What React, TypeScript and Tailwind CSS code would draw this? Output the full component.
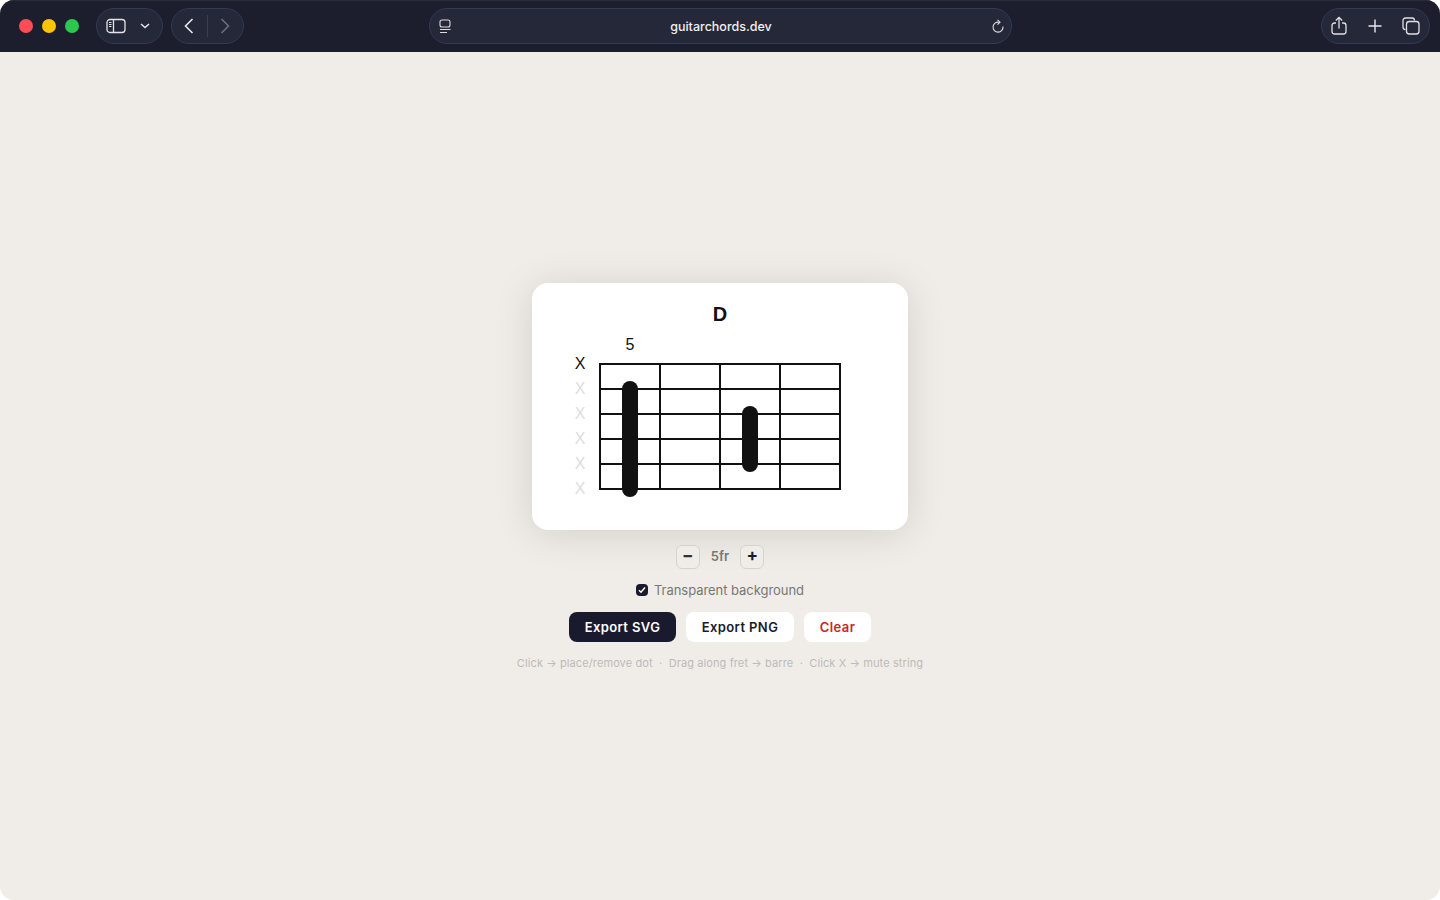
import { useState } from 'react';

const strings = [0, 1, 2, 3, 4, 5];
const frets = [0, 1, 2, 3, 4];

function ChordDiagram() {
  return (
    <svg width="328" height="207" viewBox="0 -8 328 207" className="block">
      <text x="164" y="13.5" textAnchor="middle" fontFamily="Liberation Sans, Arial, sans-serif" fontSize="20" fontWeight="700" fill="#111111">
        D
      </text>
      <text x="74" y="43" textAnchor="middle" fontFamily="Liberation Sans, Arial, sans-serif" fontSize="16" fill="#111111">
        5
      </text>
      {strings.map((s) => (
        <text
          key={s}
          x="24"
          y={61.5 + s * 25}
          textAnchor="middle"
          fontFamily="Liberation Sans, Arial, sans-serif"
          fontSize="16"
          fill={s === 0 ? '#111111' : '#dddddd'}
        >
          X
        </text>
      ))}
      {strings.map((s) => (
        <line key={s} x1="43" x2="285" y1={57 + s * 25} y2={57 + s * 25} stroke="#111111" strokeWidth="2" />
      ))}
      {frets.map((f) => (
        <line key={f} x1={44 + f * 60} x2={44 + f * 60} y1="56" y2="183" stroke="#111111" strokeWidth="2" />
      ))}
      <rect x="66" y="74" width="16" height="116" rx="8" fill="#111111" />
      <rect x="186" y="99" width="16" height="66" rx="8" fill="#111111" />
    </svg>
  );
}

function Toolbar() {
  return (
    <div className="flex h-[52px] shrink-0 items-center bg-[#1c1e2e] pl-[19px] pr-[10px] shadow-[inset_0_1px_0_#2a2c3c]">
      <div className="flex gap-[9px]">
        <span className="size-[14px] rounded-full bg-[#ff4d55]" />
        <span className="size-[14px] rounded-full bg-[#ffc400]" />
        <span className="size-[14px] rounded-full bg-[#2cc84d]" />
      </div>
      <div className="ml-[17px] flex h-9 w-[67px] items-center rounded-full border border-[#333a55] bg-[#252838] pl-[9px]">
        <svg width="20" height="16" viewBox="0 0 20 16" fill="none" stroke="#e4e4e8" strokeWidth="1.3">
          <rect x="1" y="1.5" width="18" height="13" rx="3" />
          <path d="M7.5 1.5v13" />
          <path d="M3 4.5h2.5M3 6.5h2.5M3 8.5h2.5" strokeWidth="1" />
        </svg>
        <svg width="10" height="6" viewBox="0 0 10 6" fill="none" stroke="#e4e4e8" strokeWidth="1.5" className="ml-[14px]">
          <path d="M1 1l4 3.6L9 1" />
        </svg>
      </div>
      <div className="ml-2 flex h-9 w-[73px] items-center rounded-full border border-[#333a55] bg-[#252838]">
        <svg width="10" height="16" viewBox="0 0 10 16" fill="none" stroke="#e8e8ec" strokeWidth="1.6" className="ml-[12px]">
          <path d="M8.5 1L1.5 8l7 7" />
        </svg>
        <span className="ml-[13px] h-[22px] w-px bg-[#3a3e50]" />
        <svg width="10" height="16" viewBox="0 0 10 16" fill="none" stroke="#6b6e7c" strokeWidth="1.6" className="ml-[12px]">
          <path d="M1.5 1l7 7-7 7" />
        </svg>
      </div>
      <div className="relative ml-[185px] flex h-9 w-[583px] items-center justify-between rounded-full border border-[#333a55] bg-[#252838] pl-[9px] pr-[6px]">
        <svg width="13" height="15" viewBox="0 0 13 15" fill="none" stroke="#dcdce0" strokeWidth="1.1">
          <rect x="1" y="1" width="10" height="7" rx="2" />
          <path d="M1 10.5h10.5M1 13.5h7" />
        </svg>
        <span className="absolute left-0 right-0 ml-[1px] mt-[2px] text-center text-[12.5px] font-medium text-[#f0f0f2]">
          guitarchords.dev
        </span>
        <svg width="14" height="16" viewBox="0 0 14 16" fill="none" stroke="#dcdce0" strokeWidth="1.1" className="mt-[1px]">
          <path d="M8 3.2A5 5 0 1 0 12 7.5" />
          <path d="M6.5 0.8L9 3.2 6.5 5.6" />
        </svg>
      </div>
      <div className="ml-auto flex h-9 w-[109px] items-center rounded-full border border-[#333a55] bg-[#252838] pl-[9px]">
        <svg width="16" height="20" viewBox="0 0 16 20" fill="none" stroke="#e0e0e4" strokeWidth="1.3" className="mb-[1px]">
          <path d="M5 7H3.5A2.5 2.5 0 0 0 1 9.5v6A2.5 2.5 0 0 0 3.5 18h9a2.5 2.5 0 0 0 2.5-2.5v-6A2.5 2.5 0 0 0 12.5 7H11" />
          <path d="M8 12.5V1.5M4.8 4.5L8 1.3l3.2 3.2" />
        </svg>
        <svg width="14" height="14" viewBox="0 0 14 14" fill="none" stroke="#e8e8ec" strokeWidth="1.4" className="ml-[21px]">
          <path d="M7 0.5v13M0.5 7h13" />
        </svg>
        <svg width="18" height="18" viewBox="0 0 18 18" fill="none" stroke="#e0e0e4" strokeWidth="1.3" className="ml-[20px]">
          <path d="M3.5 12.5A2.5 2.5 0 0 1 1 10.2V3.5A2.5 2.5 0 0 1 3.5 1h6.7A2.5 2.5 0 0 1 12.5 3.5" />
          <rect x="4.5" y="4.5" width="12.5" height="12.5" rx="2.8" />
        </svg>
      </div>
    </div>
  );
}

export default function App() {
  const [transparent, setTransparent] = useState(true);

  return (
    <div className="h-[900px] w-[1440px] overflow-hidden bg-white">
      <div className="flex h-full flex-col overflow-hidden rounded-[14px] bg-[#f0ede8] font-['Inter',sans-serif]">
        <Toolbar />
        <div className="flex flex-1 flex-col items-center justify-center">
          <div className="rounded-2xl bg-white px-6 pb-6 pt-4 shadow-[0_4px_40px_rgba(0,0,0,0.12)]">
            <ChordDiagram />
          </div>
          <div className="mt-[15px] flex items-center gap-[11px]">
            <button className="flex size-6 items-center justify-center rounded-md border border-[#d5d3ce] bg-[#f0ede8] pb-[2px] text-[17px] leading-none font-bold text-[#333333]">
              −
            </button>
            <span className="text-[13px] font-semibold text-[#777777]">5fr</span>
            <button className="flex size-6 items-center justify-center rounded-md border border-[#d5d3ce] bg-[#f0ede8] pb-[2px] text-[17px] leading-none font-bold text-[#1a1a2e]">
              +
            </button>
          </div>
          <label className="mt-[13px] flex items-center gap-[6px] text-[13px] leading-[16px] tracking-[-0.05px] text-[#777777]">
            <input type="checkbox" checked={transparent} onChange={() => setTransparent(!transparent)} className="sr-only" />
            <span className="flex size-[12px] items-center justify-center rounded-[4px] bg-[#1a1a2e]">
              <svg width="8" height="8" viewBox="0 0 8 8" fill="none" stroke="#ffffff" strokeWidth="1.5">
                <path d="M1 4.2l2 2L7 1.5" />
              </svg>
            </span>
            Transparent background
          </label>
          <div className="mt-[14px] flex gap-[10px]">
            <button className="h-[30px] w-[107px] rounded-lg bg-[#1a1a2e] pt-[2px] text-[13px] font-semibold tracking-[0.4px] text-white">Export SVG</button>
            <button className="h-[30px] w-[108px] rounded-lg bg-white pt-[2px] text-[13px] font-semibold tracking-[0.4px] text-[#1a1a2e]">Export PNG</button>
            <button className="h-[30px] w-[67px] rounded-lg bg-white pt-[2px] text-[13px] font-semibold tracking-[0.4px] text-[#c62828]">Clear</button>
          </div>
          <p className="mt-[14px] whitespace-pre text-[11px] leading-[14px] tracking-[0.1px] text-[#bbbbbb]">
            Click → place/remove dot  ·  Drag along fret → barre  ·  Click X → mute string
          </p>
        </div>
      </div>
    </div>
  );
}
